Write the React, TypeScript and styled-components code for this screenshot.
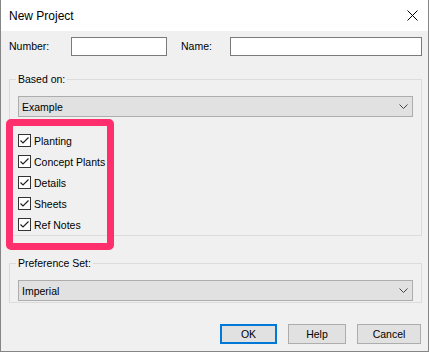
import React from 'react'
import styled, { createGlobalStyle } from 'styled-components'

const colors = {
  face: '#f0f0f0',
  frame: '#858585',
  group: '#dcdcdc',
  control: '#e1e1e1',
  controlBorder: '#adadad',
  inputBorder: '#7a7a7a',
  focus: '#0078d7',
  marker: '#ff2f6d',
  text: '#000000'
}

const GlobalStyle = createGlobalStyle`
html, body {
  margin: 0;
  padding: 0;
  background: #ffffff;
}
body {
  font-family: "Liberation Sans", Arial, sans-serif;
  font-size: 10.5px;
  color: ${colors.text};
}
`

const Window = styled.div`
position: relative;
box-sizing: border-box;
width: 429px;
height: 352px;
border: 1px solid ${colors.frame};
border-top: none;
background-color: ${colors.face};
display: flex;
flex-direction: column;
`

const TitleBar = styled.div`
height: 31px;
flex: none;
background-color: #ffffff;
display: flex;
align-items: center;
justify-content: space-between;
padding: 0 10px 0 8px;
`

const Title = styled.span`
font-size: 12px;
line-height: 14px;
`

const Body = styled.div`
padding: 6px 6px 0 8px;
display: flex;
flex-direction: column;
`

const FieldRow = styled.div`
display: flex;
align-items: center;
height: 19px;
`

const Label = styled.label<{ width: number; gap?: number }>`
width: ${props => props.width}px;
margin-left: ${props => props.gap || 0}px;
line-height: 19px;
flex: none;
`

const TextInput = styled.input<{ width: number }>`
box-sizing: border-box;
width: ${props => props.width}px;
height: 19px;
margin: 0;
border: 1px solid ${colors.inputBorder};
background: #ffffff;
outline: none;
flex: none;
`

const Group = styled.fieldset<{ top: number; bottom?: number }>`
margin: ${props => props.top}px 0 0 0;
padding: 10px 8px ${props => props.bottom || 0}px 8px;
border: 1px solid ${colors.group};
min-width: 0;
`

const Legend = styled.legend`
padding: 0 2px;
margin-left: -2px;
line-height: 14px;
`

const Select = styled.div`
box-sizing: border-box;
height: 21px;
border: 1px solid ${colors.controlBorder};
background-color: ${colors.control};
display: flex;
align-items: center;
justify-content: space-between;
padding: 0 4px 0 3px;
`

const CheckList = styled.div`
margin-top: 13px;
display: flex;
flex-direction: column;
`

const CheckRow = styled.label`
height: 21px;
display: flex;
align-items: center;
gap: 3px;
`

const Box = styled.span`
box-sizing: border-box;
width: 13px;
height: 13px;
border: 1px solid #333333;
background: #ffffff;
display: flex;
flex: none;
`

const Buttons = styled.div`
margin-top: 21px;
padding-right: 1px;
display: flex;
justify-content: flex-end;
gap: 11px;
`

const Button = styled.button<{ width: number; primary?: boolean }>`
box-sizing: border-box;
width: ${props => props.width}px;
height: 20px;
margin: 0;
padding: 0;
font-family: inherit;
font-size: 10.5px;
color: ${colors.text};
background-color: ${colors.control};
border: ${props => props.primary ? `2px solid ${colors.focus}` : `1px solid ${colors.controlBorder}`};
`

const Marker = styled.div`
position: absolute;
left: 5px;
top: 119px;
width: 108px;
height: 131px;
box-sizing: border-box;
border: 7px solid ${colors.marker};
border-radius: 5px;
pointer-events: none;
`

const CloseIcon = () => (
  <svg width="11" height="11" viewBox="0 0 11 11">
    <path d="M0.5 0.5L10.5 10.5M10.5 0.5L0.5 10.5" stroke="#000" strokeWidth="1" fill="none" />
  </svg>
)

const Chevron = () => (
  <svg width="9" height="5" viewBox="0 0 9 5">
    <path d="M0.5 0.5L4.5 4.5L8.5 0.5" stroke="#444" strokeWidth="1" fill="none" />
  </svg>
)

const Check = () => (
  <svg width="11" height="11" viewBox="0 0 11 11">
    <path d="M1.5 5.5L4 8L9.5 2.5" stroke="#222" strokeWidth="1.2" fill="none" />
  </svg>
)

const layers = ['Planting', 'Concept Plants', 'Details', 'Sheets', 'Ref Notes']

const App = () => {
  return (
    <>
      <GlobalStyle />
      <Window>
        <TitleBar>
          <Title>New Project</Title>
          <CloseIcon />
        </TitleBar>
        <Body>
          <FieldRow>
            <Label width={62}>Number:</Label>
            <TextInput width={96} />
            <Label width={49} gap={14}>Name:</Label>
            <TextInput width={192} />
          </FieldRow>
          <Group top={16}>
            <Legend>Based on:</Legend>
            <Select>
              <span>Example</span>
              <Chevron />
            </Select>
            <CheckList>
              {layers.map(name => (
                <CheckRow key={name}>
                  <Box><Check /></Box>
                  {name}
                </CheckRow>
              ))}
            </CheckList>
          </Group>
          <Group top={20} bottom={1}>
            <Legend>Preference Set:</Legend>
            <Select>
              <span>Imperial</span>
              <Chevron />
            </Select>
          </Group>
          <Buttons>
            <Button primary width={57}>OK</Button>
            <Button width={58}>Help</Button>
            <Button width={64}>Cancel</Button>
          </Buttons>
        </Body>
        <Marker />
      </Window>
    </>
  )
}

export default App
